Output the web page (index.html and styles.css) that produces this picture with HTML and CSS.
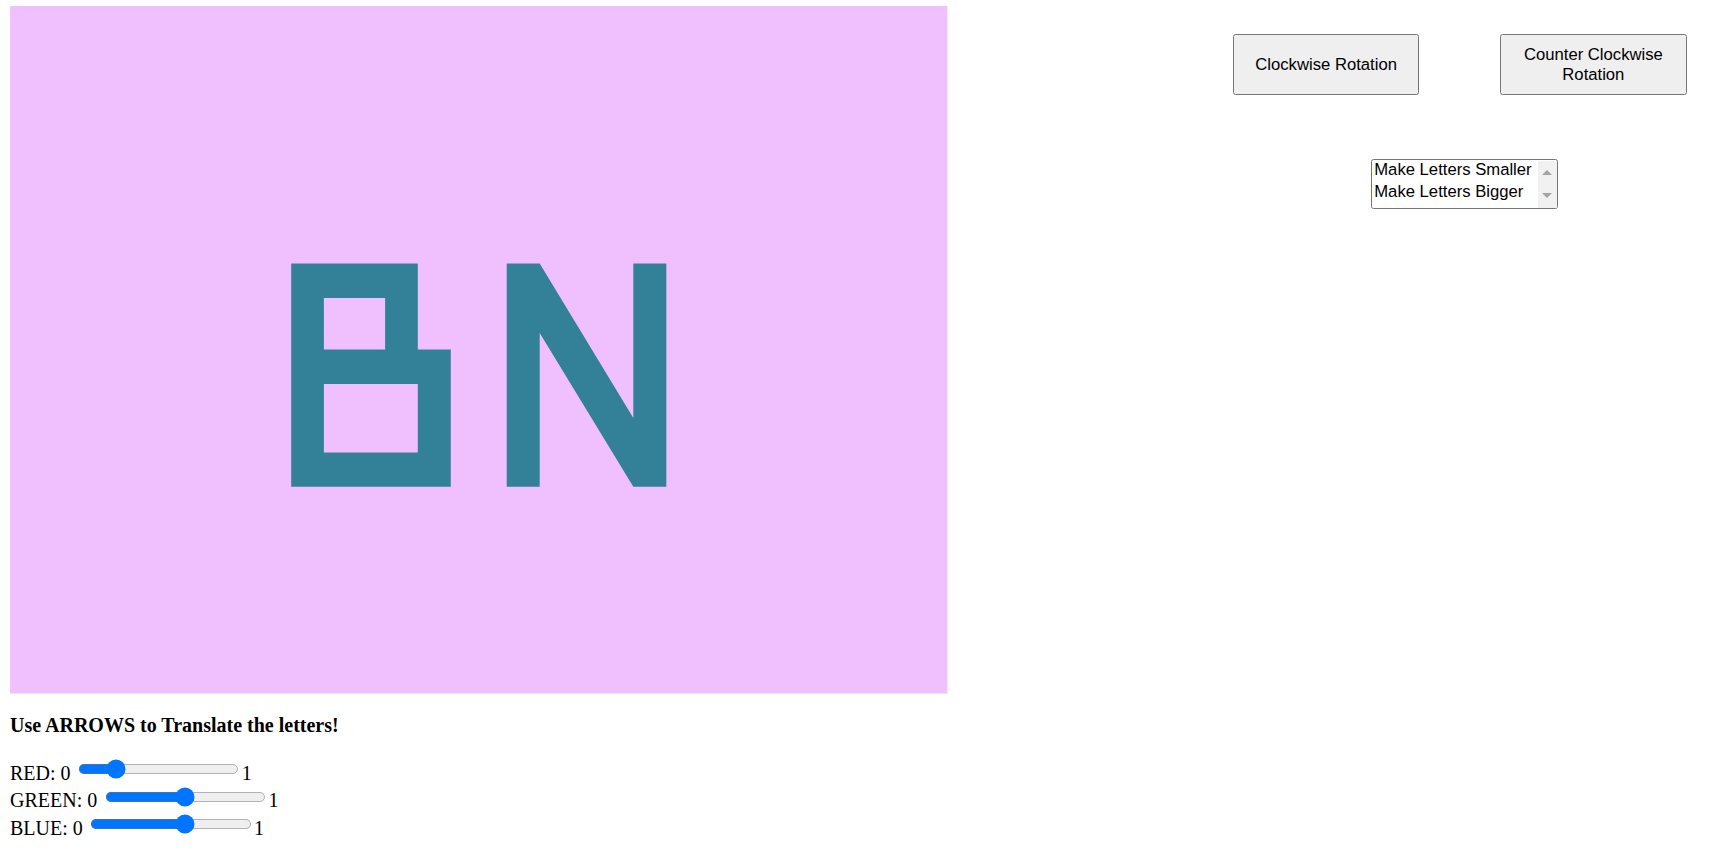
FILE: index.html
```html
<!DOCTYPE html>
<html>
<head>
<meta charset="utf-8">
<title>Letters</title>
<link rel="stylesheet" href="styles.css">
</head>
<body>
<div class="page">
  <div class="left">
    <svg class="stage" width="750" height="550" viewBox="0 0 938 688" xmlns="http://www.w3.org/2000/svg">
      <rect x="0" y="0" width="938" height="688" fill="#f0c0fe"/>
      <path fill="#338099" fill-rule="evenodd" d="M281.3 257.7 H408 V343.7 H441 V481 H281.3 Z M314 292.3 V343.7 H375.3 V292.3 Z M314 378.3 V446.7 H408 V378.3 Z"/>
      <path fill="#338099" d="M497 257.7 H530 L623.7 412.3 V257.7 H656.7 V481 H623.7 L530 327.3 V481 H497 Z"/>
    </svg>
    <p class="hint"><b>Use ARROWS to Translate the letters!</b></p>
    <div class="sliders">
      <div class="row">RED: 0 <input class="range" type="range" min="0" max="1" step="0.1" value="0.2">1</div>
      <div class="row">GREEN: 0 <input class="range" type="range" min="0" max="1" step="0.1" value="0.5">1</div>
      <div class="row">BLUE: 0 <input class="range" type="range" min="0" max="1" step="0.1" value="0.6">1</div>
    </div>
  </div>
  <div class="right">
    <div class="buttons">
      <button class="btn">Clockwise Rotation</button>
      <button class="btn">Counter Clockwise Rotation</button>
    </div>
    <div class="menu-wrap">
      <select class="menu" size="2">
        <option>Make Letters Smaller</option>
        <option>Make Letters Bigger</option>
      </select>
      <div class="scrollbar">
        <span class="arrow arrow-up"></span>
        <span class="arrow arrow-down"></span>
      </div>
    </div>
  </div>
</div>
</body>
</html>
```
FILE: styles.css
```css
html, body {
  margin: 0;
  padding: 0;
  background: #ffffff;
}
.page {
  zoom: 1.25;
  display: flex;
  align-items: flex-start;
  padding: 4.8px 8px 0 8px;
  font-family: "Liberation Serif", "Times New Roman", serif;
  font-size: 16px;
  color: #000;
}
.left {
  display: flex;
  flex-direction: column;
}
.stage {
  display: block;
}
.hint {
  margin: 16px 0 16px 0;
}
.row {
  white-space: nowrap;
}
.range {
  vertical-align: baseline;
}
.right {
  display: flex;
  flex-direction: column;
  align-items: flex-start;
  padding-left: 228.4px;
  padding-top: 22.4px;
}
.buttons {
  display: flex;
  gap: 64.8px;
}
.btn {
  width: 149px;
  height: 49px;
  font-family: "Liberation Sans", Arial, sans-serif;
  font-size: 13.333px;
}
.menu-wrap {
  position: relative;
  margin-top: 51.2px;
  margin-left: 110.2px;
}
.menu {
  display: block;
  margin: 0;
  width: 149.6px;
  height: 39.6px;
  font-family: "Liberation Sans", Arial, sans-serif;
  font-size: 13.333px;
}
.scrollbar {
  position: absolute;
  top: 1px;
  right: 1px;
  bottom: 1px;
  width: 15px;
  background: #f1f1f1;
  display: flex;
  flex-direction: column;
  align-items: center;
  justify-content: space-between;
  padding: 7.5px 0 7.5px 0;
  box-sizing: border-box;
  pointer-events: none;
}
.arrow {
  display: block;
  width: 0;
  height: 0;
  border-left: 4px solid transparent;
  border-right: 4px solid transparent;
}
.arrow-up {
  border-bottom: 4px solid #a3a3a3;
}
.arrow-down {
  border-top: 4px solid #a3a3a3;
}
```
